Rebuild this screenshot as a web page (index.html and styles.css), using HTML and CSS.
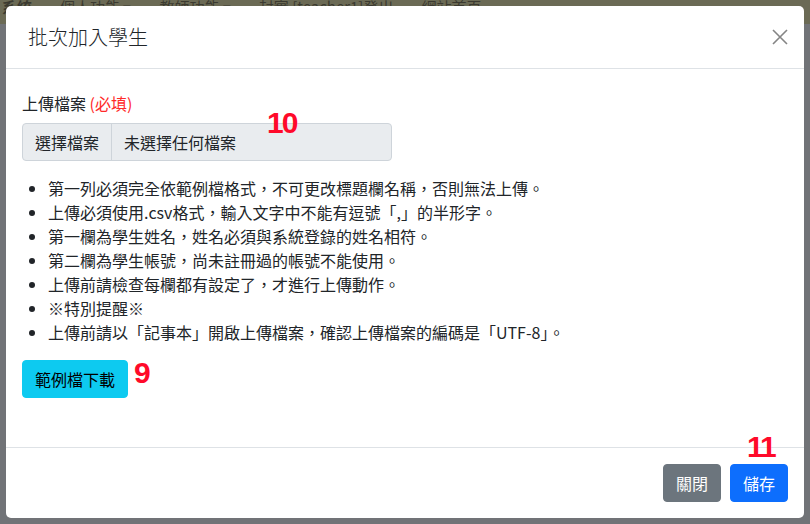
FILE: index.html
```html
<!DOCTYPE html>
<html lang="zh-Hant">
<head>
    <meta charset="UTF-8">
    <meta name="viewport" content="width=device-width, initial-scale=1.0">
    <title>批次加入學生</title>
    <link rel="stylesheet" href="styles.css">
</head>
<body>
    <!-- page behind the modal -->
    <div class="page">
        <div class="topbar">
            <span class="brand">系統</span>
            <span>個人功能 ▾</span>
            <span>教師功能 ▾</span>
            <span>封實 [teacher1]登出</span>
            <span>網站首頁</span>
        </div>
    </div>

    <div class="backdrop">
        <div class="modal">
            <div class="modal-header">
                <h5 class="modal-title">批次加入學生</h5>
                <button class="btn-close" type="button" aria-label="Close">
                    <svg width="16" height="16" viewBox="0 0 16 16">
                        <path d="M1 1L15 15M15 1L1 15" stroke="#222" stroke-width="1.6" fill="none"/>
                    </svg>
                </button>
            </div>

            <div class="modal-body">
                <label class="form-label">上傳檔案 <span class="required">(必填)</span></label>
                <div class="file-input">
                    <span class="file-btn">選擇檔案</span>
                    <span class="file-name">未選擇任何檔案</span>
                </div>

                <ul class="notes">
                    <li>第一列必須完全依範例檔格式，不可更改標題欄名稱，否則無法上傳。</li>
                    <li>上傳必須使用.csv格式，輸入文字中不能有逗號「,」的半形字。</li>
                    <li>第一欄為學生姓名，姓名必須與系統登錄的姓名相符。</li>
                    <li>第二欄為學生帳號，尚未註冊過的帳號不能使用。</li>
                    <li>上傳前請檢查每欄都有設定了，才進行上傳動作。</li>
                    <li>※特別提醒※</li>
                    <li>上傳前請以「記事本」開啟上傳檔案，確認上傳檔案的編碼是「UTF-8」。</li>
                </ul>

                <button class="btn btn-info" type="button">範例檔下載</button>
            </div>

            <div class="modal-footer">
                <button class="btn btn-secondary" type="button">關閉</button>
                <button class="btn btn-primary" type="button">儲存</button>
            </div>

            <!-- step markers -->
            <span class="marker marker-10">10</span>
            <span class="marker marker-9">9</span>
            <span class="marker marker-11">11</span>
        </div>
    </div>
</body>
</html>
```

FILE: styles.css
```css
* {
    box-sizing: border-box;
}

body {
    margin: 0;
    font-family: "Noto Sans CJK TC", "Noto Sans", "Liberation Sans", sans-serif;
    font-size: 16px;
    line-height: 24px;
    color: #212529;
    background-color: #717377;
    height: 524px;
    overflow: hidden;
}

.page {
    height: 100%;
}

.topbar {
    height: 24px;
    background-color: #6b6a55;
    color: #3b3a30;
    display: flex;
    gap: 28px;
    padding: 0 0 0 2px;
    font-size: 15px;
    line-height: 14px;
    overflow: hidden;
}

.brand {
    font-weight: bold;
}

.backdrop {
    position: fixed;
    inset: 0;
    padding: 6px;
}

.modal {
    position: relative;
    width: 798px;
    background-color: #fff;
    border-radius: 5px;
}

.modal-header {
    display: flex;
    align-items: center;
    justify-content: space-between;
    padding: 16px 16px 16px 22px;
    border-bottom: 1px solid #dee2e6;
}

.modal-title {
    margin: 0;
    font-size: 20px;
    font-weight: 300;
    line-height: 30px;
}

.btn-close {
    border: none;
    background: none;
    padding: 0;
    opacity: 0.55;
    display: flex;
    cursor: pointer;
}

.modal-body {
    padding: 22px 16px 49px 16px;
}

.form-label {
    display: block;
    margin-bottom: 8px;
}

.required {
    color: #ff2a2a;
}

.file-input {
    display: flex;
    width: 370px;
    height: 38px;
    border: 1px solid #ced4da;
    border-radius: 4px;
    background-color: #e9ecef;
    overflow: hidden;
}

.file-btn {
    padding: 6px 12px;
    border-right: 1px solid #ced4da;
}

.file-name {
    padding: 6px 12px;
}

.notes {
    margin: 15px 0 16px 0;
    padding-left: 26px;
}

.btn {
    font-family: inherit;
    font-size: 16px;
    line-height: 24px;
    padding: 6px 12px;
    border: 1px solid transparent;
    border-radius: 4px;
    cursor: pointer;
}

.btn-info {
    background-color: #0dcaf0;
    border-color: #0dcaf0;
    color: #000;
}

.btn-secondary {
    background-color: #6c757d;
    border-color: #6c757d;
    color: #fff;
}

.btn-primary {
    background-color: #0d6efd;
    border-color: #0d6efd;
    color: #fff;
}

.modal-footer {
    display: flex;
    justify-content: flex-end;
    gap: 9px;
    padding: 16px;
    border-top: 1px solid #dee2e6;
}

.marker {
    position: absolute;
    color: #ff0a2a;
    font-family: "Liberation Sans", sans-serif;
    font-weight: bold;
    font-size: 30px;
    line-height: 30px;
    letter-spacing: -2px;
}

.marker-10 {
    left: 261px;
    top: 102px;
}

.marker-9 {
    left: 128px;
    top: 352px;
}

.marker-11 {
    left: 741px;
    top: 426px;
}
```
